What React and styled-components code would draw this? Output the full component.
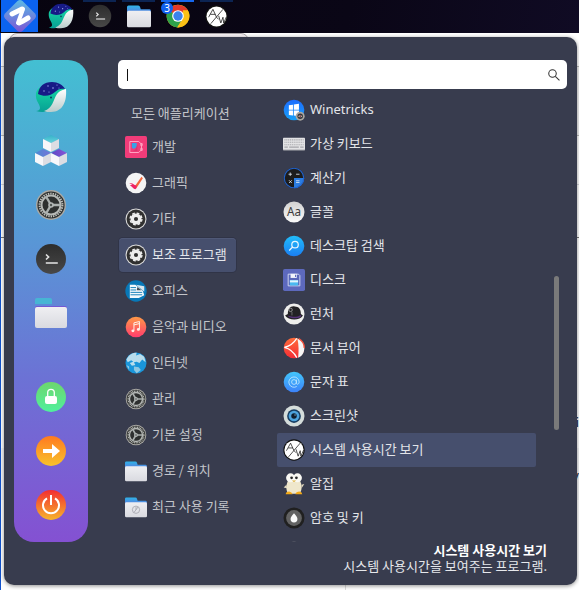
import React from "react";
import styled, { createGlobalStyle } from "styled-components";

const GlobalStyle = createGlobalStyle`
  *, *::before, *::after { box-sizing: border-box; }
  body { margin: 0; background: #fff; overflow: hidden; }
  body, button, input {
    font-family: "Noto Sans CJK KR", "Noto Sans", sans-serif;
    font-size: 13px;
  }
  button { border: 0; padding: 0; background: none; color: inherit; cursor: pointer; }
  ul { list-style: none; margin: 0; padding: 0; }
`;

const Desktop = styled.div`
  height: 100vh;
  display: flex;
  flex-direction: column;
`;

const Taskbar = styled.nav`
  flex: none;
  height: 33px;
  padding-left: 1px;
  display: flex;
  gap: 6px;
  background: linear-gradient(100deg, #07040f, #0a0616 60%, #100b24);
`;

const StartButton = styled.button`
  width: 37px;
  height: 32px;
  display: grid;
  place-items: center;
  background: #0b63f0;
`;

const TaskButton = styled.button`
  position: relative;
  width: 33px;
  height: 32px;
  display: grid;
  place-items: center;
  border-top: 2px solid
    ${(p) => (p.$state === "active" ? "#1667ee" : p.$state === "open" ? "#0c2452" : "transparent")};
  border-bottom: 2px solid transparent;
`;

const CountBadge = styled.span`
  position: absolute;
  left: 0;
  top: 0;
  width: 12px;
  height: 12px;
  border-radius: 6px;
  background: #1060f0;
  color: #fff;
  font: 10px/12px "Noto Sans", sans-serif;
  text-align: center;
`;

const Workspace = styled.main`
  position: relative;
  flex: 1;
  min-height: 0;
  display: flex;
  padding: 4px 2px 5px 4px;
  background: #fff;
`;

const Backdrop = styled.div`
  position: absolute;
  inset: 0;
  border-left: 1px solid #1152cc;
  display: flex;
  flex-direction: column;
  overflow: hidden;
  color: #20262e;
`;

const WindowEdge = styled.div`
  flex: none;
  height: 33px;
  width: 240px;
  margin-left: 8px;
  border: 1px solid #aaa5a8;
  border-radius: 8px 8px 0 0;
  background: #f7f2f5;
`;

const Band = styled.div`
  flex: none;
  height: ${(p) => p.$height}px;
  display: flex;
  align-items: flex-end;
  justify-content: flex-end;
  padding-bottom: 16px;
  border-top: 1px solid ${(p) => p.$line};
  background: ${(p) => p.$fill || "#fff"};
`;

const BackdropFoot = styled.div`
  flex: 1;
  width: 345px;
  border-right: 1px solid #dcdcdc;
`;

const Menu = styled.section`
  position: relative;
  flex: 1;
  min-width: 0;
  display: flex;
  gap: 30px;
  padding: 23px 10px 11px;
  border-radius: 10px;
  background: #383c4e;
  box-shadow: 0 1px 4px rgba(0, 0, 0, 0.45);
`;

const Sidebar = styled.aside`
  flex: none;
  width: 74px;
  margin-bottom: 32px;
  padding: 10px 0;
  display: flex;
  flex-direction: column;
  justify-content: space-between;
  border-radius: 20px;
  background: linear-gradient(#43bfd2, #5996d6 38%, #6c72d5 66%, #8451d2);
`;

const SidebarGroup = styled.div`
  display: flex;
  flex-direction: column;
`;

const SidebarButton = styled.button`
  height: 54px;
  display: grid;
  place-items: center;
`;

const Content = styled.div`
  flex: 1;
  min-width: 0;
  display: flex;
  flex-direction: column;
`;

const SearchBox = styled.label`
  flex: none;
  height: 29px;
  margin-bottom: 4px;
  padding: 0 7px 0 9px;
  display: flex;
  align-items: center;
  border-radius: 5px;
  background: #fff;
  color: #333;
`;

const Caret = styled.span`
  width: 1px;
  height: 12px;
  background: #111;
`;

const SearchInput = styled.input`
  flex: 1;
  min-width: 0;
  border: 0;
  padding: 0 4px;
  outline: 0;
  background: none;
  caret-color: transparent;
`;

const Panes = styled.div`
  flex: 1;
  min-height: 0;
  display: grid;
  grid-template-columns: 118px minmax(0, 1fr) 5px;
  column-gap: 18px;
  padding: 0 8px 0 1px;
`;

const CategoryList = styled.ul`
  display: flex;
  flex-direction: column;
  gap: 2px;
  padding-top: 5px;
  color: #c3c5ca;
`;

const AllButton = styled.button`
  height: 30px;
  padding: 0 0 2px 12px;
`;

const CategoryButton = styled.button`
  width: 117px;
  height: 34px;
  padding: 0 6px;
  display: flex;
  align-items: center;
  gap: 5px;
  white-space: nowrap;
  border-radius: 4px;
  ${(p) =>
    p.$selected &&
    `background: #464f6d; color: #e4e6eb; box-shadow: 0 0 0 1px #303447, inset 0 1px #505977;`}
`;

const AppList = styled.ul`
  min-height: 0;
  margin-left: 22px;
  overflow-y: auto;
  scrollbar-width: none;
  color: #e3e5e9;
`;

const AppButton = styled.button`
  width: 100%;
  height: 34px;
  padding: 0 6px;
  display: flex;
  align-items: center;
  gap: 5px;
  white-space: nowrap;
  border-radius: 2px;
  background: ${(p) => (p.$selected ? "#464f6d" : "none")};
`;

const Label = styled.span`
  padding-bottom: 3px;
  ${(p) => p.$latin && `font-family: "Noto Sans", sans-serif;`}
`;

const ScrollTrack = styled.div`
  padding-top: 183px;
`;

const ScrollThumb = styled.div`
  height: 154px;
  border-radius: 3px;
  background: #7a7a7a;
`;

const Details = styled.footer`
  flex: none;
  padding-right: 20px;
  text-align: right;
  line-height: 16px;
  color: #e6e8ec;
`;

const DetailsTitle = styled.strong`
  display: block;
  font-weight: 700;
  color: #fff;
`;

const DetailsText = styled.span`
  display: block;
`;

const IconSvg = styled.svg`
  display: block;
  flex: none;
  width: ${(p) => p.$size}px;
  height: ${(p) => p.$size}px;
`;

const Icon = ({ size = 22, children }) => (
  <IconSvg $size={size} viewBox="0 0 32 32" aria-hidden="true">
    {children}
  </IconSvg>
);

const Stops = ({ id, from, to, horizontal }) => (
  <linearGradient id={id} x1="0" y1="0" x2={horizontal ? "1" : "0"} y2={horizontal ? "0" : "1"}>
    <stop stopColor={from} />
    <stop offset="1" stopColor={to} />
  </linearGradient>
);

const Gradients = styled.svg`
  position: absolute;
  width: 0;
  height: 0;
`;

const GradientDefs = () => (
  <Gradients aria-hidden="true">
    <defs>
      <Stops id="whaleGreen" from="#18dca5" to="#079f94" />
      <Stops id="whaleBelly" from="#ffffff" to="#b9cccb" />
      <Stops id="folderTab" from="#2eb5e9" to="#7756d6" />
      <Stops id="folderFront" from="#efeff2" to="#d9dae0" />
      <Stops id="dark" from="#2d2d2d" to="#484848" />
      <Stops id="green" from="#6dd66d" to="#50f09d" />
      <Stops id="orange" from="#ff7a20" to="#f8c22c" />
      <Stops id="red" from="#f22d32" to="#f7b42c" />
      <Stops id="music" from="#ff9a47" to="#ff3d6d" />
      <Stops id="sky" from="#21bdfa" to="#1b7ef2" />
      <Stops id="win" from="#1d6dff" to="#18a0f6" />
      <Stops id="at" from="#43c6fa" to="#3c82fa" />
      <Stops id="silver" from="#d2d2d2" to="#fafafa" />
      <Stops id="logo" from="#5cb9e4" to="#7b55d5" />
      <Stops id="cubeTeal" from="#36b1c9" to="#67d4dc" />
      <Stops id="cubeBlue" from="#4a8bd3" to="#7773d8" horizontal />
      <Stops id="cubePurple" from="#5b49c4" to="#8b54d6" horizontal />
      <Stops id="pdf" from="#ff6d3b" to="#f52c35" />
    </defs>
  </Gradients>
);

const WhaleIcon = ({ size }) => (
  <Icon size={size}>
    <path d="M1 12C0 20 5 23 5 27c0 2-2 3-4 3 6 2 12 1 15-2 6-4 9-12 13-20C24 2 4 1 1 12z" fill="url(#whaleGreen)" />
    <path d="M31 8c1 12-3 23-15 23-3 0-5 0-7-1 9-3 9-11 13-17 3-4 6-4 9-5z" fill="url(#whaleBelly)" />
    <path d="M3 13C4 5 9 1 17 1c6 0 11 3 13 7-4-1-7 0-10 3-4 4-11 5-17 2z" fill="#171a86" />
    <g fill="#9eaaf0">
      <circle cx="9" cy="10" r=".7" /><circle cx="13" cy="5" r=".7" /><circle cx="18" cy="7" r=".8" />
      <circle cx="22" cy="4" r=".6" /><circle cx="14" cy="11" r=".6" /><circle cx="24" cy="7" r=".5" />
    </g>
    <circle cx="16" cy="16.5" r="1" fill="#0a4059" />
  </Icon>
);

const Cube = ({ x, y, fill }) => (
  <g transform={`translate(${x} ${y})`}>
    <path d="M8 0l8 4-8 4-8-4z" fill={fill} />
    <path d="M0 4l8 4v9l-8-4z" fill="#f7f7fa" />
    <path d="M16 4l-8 4v9l8-4z" fill="#dcdde3" />
  </g>
);

const CubesIcon = () => (
  <Icon size={32}>
    <Cube x={8} y={0} fill="url(#cubeTeal)" />
    <Cube x={0} y={14} fill="url(#cubeBlue)" />
    <Cube x={16} y={14} fill="url(#cubePurple)" />
  </Icon>
);

const SettingsIcon = ({ size }) => (
  <Icon size={size}>
    <circle cx="16" cy="16" r="15" fill="#aaa9a4" />
    <circle cx="16" cy="16" r="13.6" fill="#2e302f" />
    <circle cx="16" cy="16" r="11.4" fill="none" stroke="#bdbfbb" strokeWidth="2" strokeDasharray="1.4 .99" />
    <circle cx="16" cy="16" r="9.5" fill="none" stroke="#b6b9b6" strokeWidth="2" />
    <path d="M16 16h9.5M16 16l-5-8.5M16 16l-5 8.5" stroke="#abb0ae" strokeWidth="2.4" />
    <circle cx="16" cy="16" r="2.8" fill="#b3b7b5" />
    <circle cx="16" cy="16" r="1.2" fill="#4f5351" />
  </Icon>
);

const TerminalIcon = ({ size }) => (
  <Icon size={size}>
    <circle cx="16" cy="16" r="15" fill="url(#dark)" />
    <path d="M11 11.5l2.6 2.5-2.6 2.5" fill="none" stroke="#e2e2e2" strokeWidth="1.6" />
    <path d="M10.8 20h12" stroke="#ddd" strokeWidth="1.6" />
  </Icon>
);

const FolderIcon = ({ size, recent }) => (
  <Icon size={size}>
    <path d="M0 4q0-2 2-2h13q2 0 2.4 2l1 3H30q2 0 2 3v8H0z" fill="url(#folderTab)" />
    <rect y="9" width="32" height="22" rx="2" fill="url(#folderFront)" />
    {recent && (
      <g fill="none" stroke="#aaaab2" strokeWidth="1.3">
        <circle cx="16" cy="20" r="5.3" /><path d="M13 24l6-8m-3 4v-4" />
      </g>
    )}
  </Icon>
);

const TealFolderIcon = () => (
  <Icon size={32}>
    <path d="M0 3q0-2 2-2h13q2 0 2 2v4H0z" fill="#47b5d4" />
    <path d="M0 7h17v2H0z" fill="#5c8ad8" />
    <path d="M0 13v-2q0-2 2-2h28q2 0 2 2v2z" fill="#7458d4" />
    <rect y="10" width="32" height="21" rx="2" fill="url(#folderFront)" />
  </Icon>
);

const LockIcon = () => (
  <Icon size={32}>
    <circle cx="16" cy="16" r="15" fill="url(#green)" />
    <path d="M12.7 15.5v-4q0-3.2 3.3-3.2t3.3 3.2v4" fill="none" stroke="#fff" strokeWidth="1.3" />
    <rect x="10" y="15" width="12" height="8" rx="2" fill="#fff" />
  </Icon>
);

const LogoutIcon = () => (
  <Icon size={32}>
    <circle cx="16" cy="16" r="15" fill="url(#orange)" />
    <path d="M8 14h9V9l8 7-8 7v-5H8z" fill="#fff" />
  </Icon>
);

const PowerIcon = () => (
  <Icon size={32}>
    <circle cx="16" cy="16" r="15" fill="url(#red)" />
    <path d="M12 9.3a8 8 0 1 0 8 0" fill="none" stroke="#fff" strokeWidth="2" />
    <path d="M16 6v10" stroke="#fff" strokeWidth="2" />
  </Icon>
);

const LogoIcon = () => (
  <Icon size={32}>
    <path d="M13.5 1Q16-1 18.5 1L31 13.5q2 2.500 0 5L18.5 31q-2.500 2-5 0L1 18.5q-2-2.500 0-5z" fill="url(#logo)" />
    <path d="M8 14l6-3 4-2M15 23l4-2 5-3" fill="none" stroke="#fff" strokeWidth="5" strokeLinecap="round" />
    <path d="M19 9l-5 14" fill="none" stroke="#fff" strokeWidth="4" strokeLinecap="round" />
  </Icon>
);

const ChromeIcon = () => (
  <Icon size={26}>
    <circle cx="16" cy="16" r="14" fill="#fbc116" />
    <path d="M16 16L3.9 9A14 14 0 0 1 28.1 9z" fill="#e3392b" />
    <path d="M3.9 9A14 14 0 0 0 15 30l7-11-6-3z" fill="#2da14a" />
    <path d="M15 30l7-11 0-10h6.100a14 14 0 0 1-13.100 21z" fill="#fbc116" />
    <circle cx="16" cy="16" r="7.200" fill="#fff" />
    <circle cx="16" cy="16" r="5.800" fill="#3b83ed" />
  </Icon>
);

const AwIcon = ({ size }) => (
  <Icon size={size}>
    <circle cx="16" cy="16" r="15.5" fill="#111" />
    <circle cx="16" cy="16" r="14" fill="#fff" />
    <g fill="none" stroke="#1d1d1d" strokeWidth="1.1">
      <path d="M5 17l6-11 5 11M7.500 13h7M8 26L25 6M16 17l3 3M19 15l3 10 3-8 1 8 4-9" />
    </g>
  </Icon>
);

const DevIcon = () => (
  <Icon>
    <rect width="32" height="32" rx="2.500" fill="#f13c79" />
    <path d="M7 8h13l4 4v8l-4 4H7zM23 11h2v3h-2zM23 18h2v3h-2z" fill="none" stroke="#ffa8c4" strokeWidth="1.400" />
    <path d="M10 10h7v7h-2l-2 2-3-2z" fill="#38a2e8" />
    <path d="M15 20l3-8v10h-7z" fill="#d9366e" />
  </Icon>
);

const GraphicsIcon = () => (
  <Icon>
    <circle cx="16" cy="16" r="15" fill="#f4f4f4" />
    <path d="M24 7l2 2-9 14-3-2z" fill="#f3683c" />
    <path d="M14 19c4 0 4 5 1 6-3 0-4-3-8-6l4 0-5-3c4 0 6 1 8 3z" fill="#ee2464" />
  </Icon>
);

const GearIcon = () => (
  <Icon>
    <circle cx="16" cy="16" r="15.300" fill="#dcdcdc" />
    <circle cx="16" cy="16" r="13.700" fill="#303030" />
    <circle cx="16" cy="16" r="5.500" fill="none" stroke="#eee" strokeWidth="5" />
    <circle cx="16" cy="16" r="8.600" fill="none" stroke="#eee" strokeWidth="2" strokeDasharray="4 2.750" />
  </Icon>
);

const OfficeIcon = () => (
  <Icon>
    <circle cx="16" cy="16" r="15.500" fill="#0878b8" />
    <path d="M7 7h8l11 9 2 6-8 4H7z" fill="#f2f9fd" />
    <path d="M16 7l12 10V9z" fill="#d9e6ee" />
    <path d="M8 11h8M8 14.500h8M8 18h17M8 21.500h17" stroke="#1680b8" strokeWidth="1.400" />
    <path d="M18 10l6 5h-7z" fill="#404d57" />
  </Icon>
);

const MusicIcon = () => (
  <Icon>
    <circle cx="16" cy="16" r="15" fill="url(#music)" />
    <path d="M13 21V10l8-2v11M13 13l8-2" fill="none" stroke="#fff1e9" strokeWidth="1.400" />
    <ellipse cx="11.500" cy="21.500" rx="2.200" ry="2" fill="#fff1e9" />
    <ellipse cx="19.500" cy="19.500" rx="2.200" ry="2" fill="#fff1e9" />
  </Icon>
);

const GlobeIcon = () => (
  <Icon>
    <circle cx="16" cy="16" r="15.300" fill="#1a96da" />
    <path d="M2 11c4-8 9-10 15-10l-1 4 6-2 6 4 2 8-5-4-4 5-4-2-4 1 2 4-5 1-3-4 5-2-3-2-5 3z" fill="#b9ddec" />
    <path d="M13 21l7 1 3 4-6 5-4-5zM2 19l4 2v5z" fill="#8ec7e2" />
  </Icon>
);

const WineIcon = () => (
  <Icon>
    <circle cx="16" cy="16" r="15" fill="url(#win)" />
    <path d="M8.500 9l6-.8v7.300h-6zM15.700 8l7.500-1v8.500h-7.500zM8.500 16.700h6V24l-6-.8zM15.700 16.700h7.500V25l-7.500-1z" fill="#fff" />
    <circle cx="25" cy="25" r="6.500" fill="#a9a6a0" />
    <circle cx="25" cy="25" r="4" fill="#38383b" />
    <path d="M22 25q3-3 6 0-3 3-6 0" fill="#d5d0c6" /><circle cx="25" cy="25" r="1.200" fill="#7d2636" />
  </Icon>
);

const KeyboardIcon = () => (
  <Icon>
    <rect y="7" width="32" height="18" rx="1" fill="#e3e3e5" />
    <path d="M2 10h28M2 13.500h28M2 17h28" stroke="#a9a9ad" strokeWidth="1.500" strokeDasharray="1.700 1" />
    <path d="M2 20.500h5M9 20.500h14M25 20.500h5" stroke="#a5a5aa" strokeWidth="1.600" />
    <path d="M0 24.500h32" stroke="#a0a0a5" />
  </Icon>
);

const CalculatorIcon = () => (
  <Icon>
    <circle cx="16" cy="16" r="15" fill="#1c1c1c" />
    <path d="M16 16h15a15 15 0 0 1-15 15z" fill="#2b7de2" />
    <circle cx="16" cy="16" r="14.200" fill="none" stroke="#2263cd" strokeWidth="1.600" />
    <path d="M10.500 8v5M8 10.500h5M19 10.500h5M8.800 19.300l4 4M12.800 19.300l-4 4M19 20h5M19 22.500h5" stroke="#dfe8f3" strokeWidth="1.200" />
  </Icon>
);

const FontGlyphs = styled.text`
  font-family: "Noto Sans", sans-serif;
  font-size: 17px;
`;

const FontsIcon = () => (
  <Icon>
    <circle cx="16" cy="16" r="15.300" fill="url(#silver)" />
    <FontGlyphs x="16" y="22" textAnchor="middle" fill="#3b3b3b">Aa</FontGlyphs>
  </Icon>
);

const FindIcon = () => (
  <Icon>
    <circle cx="16" cy="16" r="15" fill="url(#sky)" />
    <circle cx="17.500" cy="14" r="4.700" fill="none" stroke="#e8f7ff" strokeWidth="1.800" />
    <path d="M14 17.500l-5 5" stroke="#e8f7ff" strokeWidth="1.800" />
  </Icon>
);

const DiskIcon = () => (
  <Icon>
    <rect width="32" height="32" rx="2.500" fill="#5d69bd" />
    <path d="M7.500 7.500h15l2 2v15h-17z" fill="#5967ba" stroke="#dce1f5" strokeWidth="1.300" />
    <path d="M11 7h9v6h-9z" fill="#f2f4fb" /><path d="M17.500 8.500h1.500v3h-1.500z" fill="#5967ba" />
    <rect x="10" y="16" width="12" height="8" fill="#48b9f1" />
    <path d="M10 18h12" stroke="#e2f5fc" strokeWidth="3" />
  </Icon>
);

const LauncherIcon = () => (
  <Icon>
    <circle cx="16" cy="16" r="15.300" fill="#eeeeec" />
    <path d="M7 16c0-8 4-12 10-11 6 0 9 4 9 11l3 2c-4 8-21 8-26 0z" fill="#222124" />
    <path d="M8 18c6 3 13 3 18-1v3c-5 3-12 3-18 0z" fill="#56327a" />
    <circle cx="11" cy="10" r="2.500" fill="none" stroke="#bbb" /><path d="M13 13v5" stroke="#888" />
  </Icon>
);

const DocumentIcon = () => (
  <Icon>
    <circle cx="16" cy="16" r="15" fill="url(#pdf)" />
    <path d="M20 2c-3 5-9 11-18 13 8 2 14 7 18 15" fill="none" stroke="#fff" strokeWidth="1.700" />
    <path d="M21 2c7 2 10 8 10 14 0 7-3 12-9 14 1-10 1-18-1-28z" fill="#f6f5f5" />
    <path d="M23 2.500C29 6 31 11 31 16" fill="none" stroke="#f2503c" strokeWidth="2" />
  </Icon>
);

const AtIcon = () => (
  <Icon>
    <circle cx="16" cy="16" r="15" fill="url(#at)" />
    <circle cx="16" cy="16" r="3.500" fill="none" stroke="#c3e8ff" strokeWidth="1.200" />
    <path d="M19.500 12.500v5c0 3 4 2 4-1.500a7.500 7.500 0 1 0-3.500 6.500" fill="none" stroke="#c3e8ff" strokeWidth="1.200" />
  </Icon>
);

const EyeIcon = () => (
  <Icon>
    <circle cx="16" cy="16" r="15.300" fill="#d5dddb" />
    <circle cx="16" cy="16" r="10" fill="#173d61" />
    <circle cx="16" cy="16" r="7.800" fill="#4da3dd" />
    <circle cx="16" cy="16" r="4" fill="#101d2c" />
    <circle cx="17.500" cy="14.500" r="1" fill="#7bb4dd" />
  </Icon>
);

const AlzipIcon = () => (
  <Icon>
    <path d="M8 10C3 18 5 28 8 30h16c3-4 5-12 0-20z" fill="#efe7cc" />
    <path d="M5 17l-4 4 5 1M27 17l4-1-4 6" fill="#e5dcc0" />
    <circle cx="11" cy="7" r="6.500" fill="#faf9f4" /><circle cx="21" cy="7" r="6.500" fill="#faf9f4" />
    <circle cx="12.500" cy="7" r="2" fill="#272727" /><circle cx="19.500" cy="7" r="2" fill="#272727" />
    <path d="M13 11h6l-3 2z" fill="#dfae30" />
    <path d="M4 31q0-4 5-4 4 1 5 4zM18 31q1-4 6-4 4 1 4 4z" fill="#f3aa19" />
  </Icon>
);

const KeysIcon = () => (
  <Icon>
    <circle cx="16" cy="16" r="15.300" fill="#202020" />
    <circle cx="16" cy="16" r="11.500" fill="#626262" />
    <path d="M16 9q5 5 5 8.500a5 5 0 0 1-10 0Q11 14 16 9z" fill="#fafafa" />
  </Icon>
);

const GreyDiscIcon = () => (
  <Icon>
    <circle cx="16" cy="16" r="15" fill="#999" />
  </Icon>
);

const SearchIcon = () => (
  <Icon size={12}>
    <circle cx="12" cy="12" r="10" fill="none" stroke="currentColor" strokeWidth="2.800" />
    <path d="M19.500 19.500l11 11" stroke="currentColor" strokeWidth="2.800" />
  </Icon>
);

const tasks = [
  { name: "Whale", icon: <WhaleIcon size={26} /> },
  { name: "터미널", icon: <TerminalIcon size={24} />, state: "open" },
  { name: "파일", icon: <FolderIcon size={24} />, state: "open" },
  { name: "Chrome", icon: <ChromeIcon />, state: "active", count: 3 },
  { name: "시스템 사용시간 보기", icon: <AwIcon size={23} />, state: "open" },
];

const favorites = [
  ["Whale", <WhaleIcon size={32} />],
  ["소프트웨어", <CubesIcon />],
  ["설정", <SettingsIcon size={32} />],
  ["터미널", <TerminalIcon size={32} />],
  ["파일", <TealFolderIcon />],
];

const session = [
  ["잠금", <LockIcon />],
  ["로그아웃", <LogoutIcon />],
  ["종료", <PowerIcon />],
];

const categories = [
  ["개발", <DevIcon />],
  ["그래픽", <GraphicsIcon />],
  ["기타", <GearIcon />],
  ["보조 프로그램", <GearIcon />],
  ["오피스", <OfficeIcon />],
  ["음악과 비디오", <MusicIcon />],
  ["인터넷", <GlobeIcon />],
  ["관리", <SettingsIcon size={22} />],
  ["기본 설정", <SettingsIcon size={22} />],
  ["경로 / 위치", <FolderIcon size={22} />],
  ["최근 사용 기록", <FolderIcon size={22} recent />],
];

const apps = [
  ["Winetricks", <WineIcon />],
  ["가상 키보드", <KeyboardIcon />],
  ["계산기", <CalculatorIcon />],
  ["글꼴", <FontsIcon />],
  ["데스크탑 검색", <FindIcon />],
  ["디스크", <DiskIcon />],
  ["런처", <LauncherIcon />],
  ["문서 뷰어", <DocumentIcon />],
  ["문자 표", <AtIcon />],
  ["스크린샷", <EyeIcon />],
  ["시스템 사용시간 보기", <AwIcon size={22} />],
  ["알집", <AlzipIcon />],
  ["암호 및 키", <KeysIcon />],
];

const SidebarItems = ({ items }) => (
  <SidebarGroup>
    {items.map(([name, icon]) => (
      <SidebarButton key={name} aria-label={name}>{icon}</SidebarButton>
    ))}
  </SidebarGroup>
);

export default function App() {
  return (
    <Desktop>
      <GlobalStyle />
      <GradientDefs />
      <Taskbar>
        <StartButton aria-label="메뉴"><LogoIcon /></StartButton>
        {tasks.map((t) => (
          <TaskButton key={t.name} aria-label={t.name} $state={t.state}>
            {t.icon}
            {t.count && <CountBadge>{t.count}</CountBadge>}
          </TaskButton>
        ))}
      </Taskbar>
      <Workspace>
        <Backdrop>
          <WindowEdge />
          <Band $height={69} $line="#bbb" $fill="#f3f3f3" />
          <Band $height={49} $line="#bbb" />
          <Band $height={53} $line="#d8d8de" />
          <Band $height={210} $line="#777">i</Band>
          <Band $height={53} $line="#fff" $fill="#f5f6f8">v</Band>
          <BackdropFoot />
        </Backdrop>
        <Menu>
          <Sidebar>
            <SidebarItems items={favorites} />
            <SidebarItems items={session} />
          </Sidebar>
          <Content>
            <SearchBox>
              <Caret />
              <SearchInput type="text" aria-label="검색" />
              <SearchIcon />
            </SearchBox>
            <Panes>
              <CategoryList>
                <li><AllButton>모든 애플리케이션</AllButton></li>
                {categories.map(([name, icon]) => (
                  <li key={name}>
                    <CategoryButton $selected={name === "보조 프로그램"}>
                      {icon}
                      <Label>{name}</Label>
                    </CategoryButton>
                  </li>
                ))}
              </CategoryList>
              <AppList>
                {apps.map(([name, icon]) => (
                  <li key={name}>
                    <AppButton $selected={name === "시스템 사용시간 보기"}>
                      {icon}
                      <Label $latin={name === "Winetricks"}>{name}</Label>
                    </AppButton>
                  </li>
                ))}
                <li><AppButton aria-label="더 보기"><GreyDiscIcon /></AppButton></li>
              </AppList>
              <ScrollTrack><ScrollThumb /></ScrollTrack>
            </Panes>
            <Details>
              <DetailsTitle>시스템 사용시간 보기</DetailsTitle>
              <DetailsText>시스템 사용시간을 보여주는 프로그램.</DetailsText>
            </Details>
          </Content>
        </Menu>
      </Workspace>
    </Desktop>
  );
}
